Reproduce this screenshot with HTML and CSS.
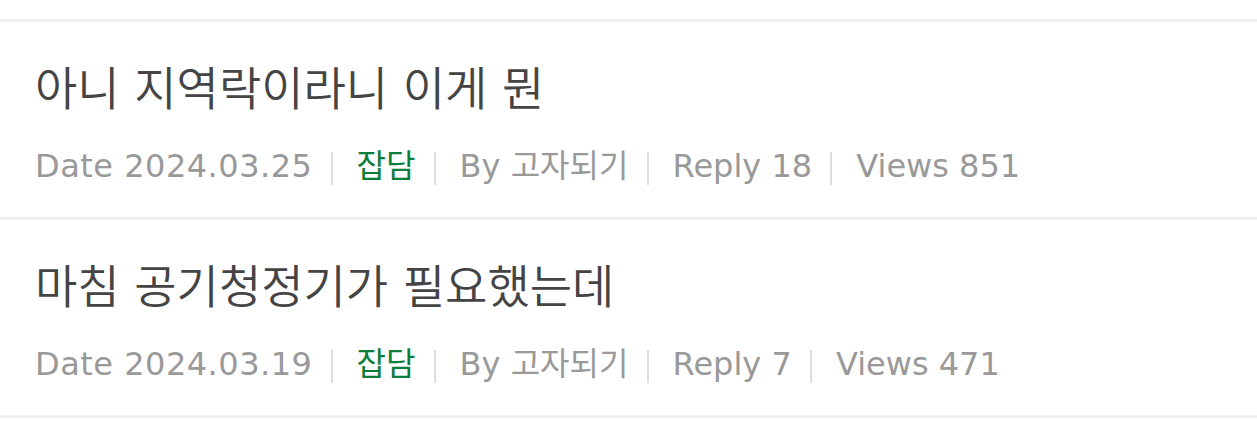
FILE: index.html
```html
<!DOCTYPE html>
<html>
  <head>
    <meta name="viewport" content="width=device-width, initial-scale=1.0">
    <title>잡담 게시판</title>
    <link rel="stylesheet" href="styles.css">
  </head>
  <body>
    <ul class="boardList">
      <li class="boardItem">
        <a class="boardTitle" href="#">아니 지역락이라니 이게 뭔</a>
        <div class="boardMeta">
          <span class="metaItem date">Date 2024.03.25</span>
          <span class="metaItem category">잡담</span>
          <span class="metaItem">By 고자되기</span>
          <span class="metaItem">Reply 18</span>
          <span class="metaItem">Views 851</span>
        </div>
      </li>
      <li class="boardItem">
        <a class="boardTitle" href="#">마침 공기청정기가 필요했는데</a>
        <div class="boardMeta">
          <span class="metaItem date">Date 2024.03.19</span>
          <span class="metaItem category">잡담</span>
          <span class="metaItem">By 고자되기</span>
          <span class="metaItem">Reply 7</span>
          <span class="metaItem">Views 471</span>
        </div>
      </li>
    </ul>
  </body>
</html>
```
FILE: styles.css
```css
html {
  background-color: #fff;
  font-family: "DejaVu Sans", "Noto Sans CJK KR", sans-serif;
}
body {
  margin: 0;
  padding: 19px 0 0 0;
}
.boardList {
  margin: 0;
  padding: 0;
  list-style-type: none;
  border-top: 3px solid #eee;
}
.boardItem {
  padding: 37px 35px 0 35px;
  height: 158px;
  border-bottom: 3px solid #eee;
}
.boardTitle {
  display: block;
  font-size: 46px;
  font-weight: 350;
  line-height: 60px;
  color: #444;
  text-decoration: none;
}
.boardMeta {
  margin: 25px 0 0 0;
  font-size: 32px;
  line-height: 45px;
  color: #999;
}
.metaItem + .metaItem:before {
  content: '';
  display: inline-block;
  width: 2px;
  height: 33px;
  background-color: #ddd;
  vertical-align: middle;
  margin: 0 24px 0 8px;
}
.date {
  letter-spacing: 0.5px;
}
.category {
  color: #0a7d3a;
}
```
